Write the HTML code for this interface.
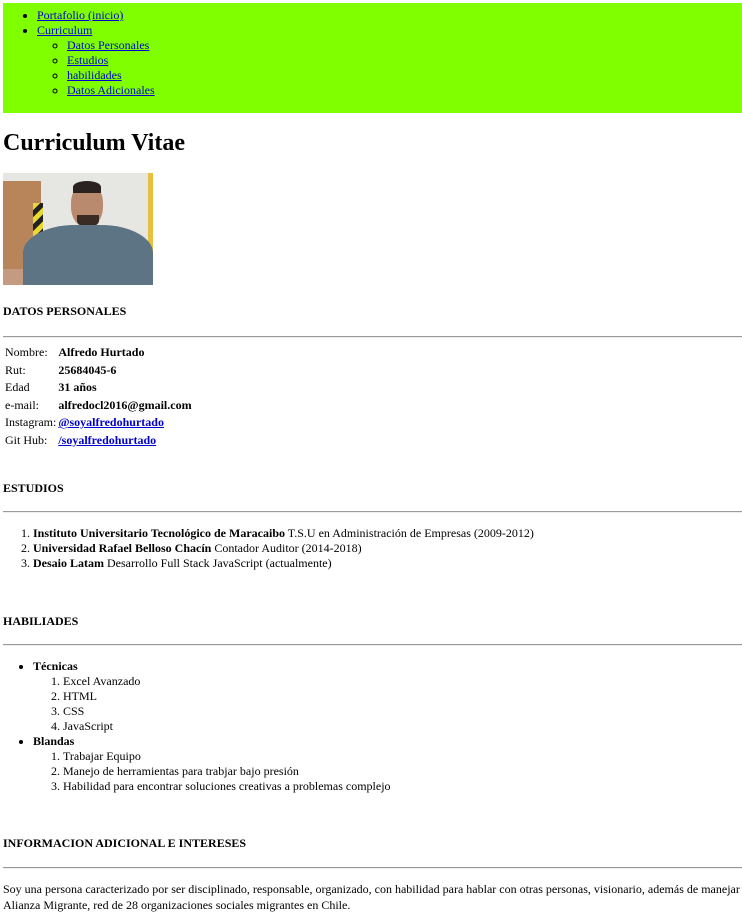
<!DOCTYPE html>
<html><head><meta charset="utf-8"><style>
body{margin:0;width:742px;height:922px;position:relative;font-family:"Liberation Serif",serif;font-size:12px;line-height:15px;color:#000;background:#fff;overflow:hidden}
a{color:#0000cc}
.abs{position:absolute;margin:0;padding:0}
ul,ol{margin:0}
nav{position:absolute;left:3px;top:3px;width:739px;height:110px;background:#7fff00}
nav>ul{padding:5px 0 0 34px}
nav ul ul{padding-left:30px;list-style:circle}
h1{position:absolute;left:3px;top:129px;margin:0;font-size:24px;line-height:28px}
h4{position:absolute;left:3px;margin:0;font-size:12px;line-height:15px}
hr{position:absolute;left:3px;width:739px;margin:0;border:0;border-top:1px solid #9a9a9a;border-bottom:1px solid #eee;height:0}
table{position:absolute;left:3px;top:344px;border-collapse:collapse}
td{padding:0 1px 0 2px;height:17.5px;line-height:17.5px}
td+td{padding-left:1px}
.photo{position:absolute;left:3px;top:173px;width:150px;height:112px;overflow:hidden;background:#e6e6e3}
</style></head><body>
<nav><ul>
<li><a href="#">Portafolio (inicio)</a></li>
<li><a href="#">Curriculum</a>
<ul><li><a href="#">Datos Personales</a></li><li><a href="#">Estudios</a></li><li><a href="#">habilidades</a></li><li><a href="#">Datos Adicionales</a></li></ul></li>
</ul></nav>
<h1>Curriculum Vitae</h1>
<div class="photo">
<div style="position:absolute;left:0;top:8px;width:38px;height:104px;background:#b8845a"></div>
<div style="position:absolute;left:30px;top:30px;width:10px;height:45px;background:repeating-linear-gradient(135deg,#e8d832 0 5px,#222 5px 10px)"></div>
<div style="position:absolute;left:145px;top:0;width:5px;height:80px;background:#e8c040"></div>
<div style="position:absolute;left:68px;top:10px;width:32px;height:44px;border-radius:45%;background:#b98a6e"></div>
<div style="position:absolute;left:70px;top:8px;width:28px;height:12px;border-radius:50% 50% 0 0;background:#2a2220"></div>
<div style="position:absolute;left:74px;top:42px;width:22px;height:12px;border-radius:0 0 50% 50%;background:#3a2c25"></div>
<div style="position:absolute;left:20px;top:52px;width:130px;height:70px;border-radius:40% 40% 0 0;background:#5c7484"></div>
<div style="position:absolute;left:0;top:96px;width:20px;height:16px;background:#c49a80"></div>
</div>
<h4 style="top:304px">DATOS PERSONALES</h4>
<hr style="top:336px">
<table>
<tr><td>Nombre:</td><td><b>Alfredo Hurtado</b></td></tr>
<tr><td>Rut:</td><td><b>25684045-6</b></td></tr>
<tr><td>Edad</td><td><b>31 años</b></td></tr>
<tr><td>e-mail:</td><td><b>alfredocl2016@gmail.com</b></td></tr>
<tr><td>Instagram:</td><td><a href="#"><b>@soyalfredohurtado</b></a></td></tr>
<tr><td>Git Hub:</td><td><a href="#"><b>/soyalfredohurtado</b></a></td></tr>
</table>
<h4 style="top:481px">ESTUDIOS</h4>
<hr style="top:511px">
<ol class="abs" style="top:526px;left:3px;padding-left:30px">
<li><b>Instituto Universitario Tecnológico de Maracaibo</b> T.S.U en Administración de Empresas (2009-2012)</li>
<li><b>Universidad Rafael Belloso Chacín</b> Contador Auditor (2014-2018)</li>
<li><b>Desaio Latam</b> Desarrollo Full Stack JavaScript (actualmente)</li>
</ol>
<h4 style="top:614px">HABILIADES</h4>
<hr style="top:644px">
<ul class="abs" style="top:659px;left:3px;padding-left:30px">
<li><b>Técnicas</b><ol style="padding-left:30px"><li>Excel Avanzado</li><li>HTML</li><li>CSS</li><li>JavaScript</li></ol></li>
<li><b>Blandas</b><ol style="padding-left:30px"><li>Trabajar Equipo</li><li>Manejo de herramientas para trabjar bajo presión</li><li>Habilidad para encontrar soluciones creativas a problemas complejo</li></ol></li>
</ul>
<h4 style="top:836px">INFORMACION ADICIONAL E INTERESES</h4>
<hr style="top:867px">
<p class="abs" style="top:881px;left:3px;width:742px;line-height:16px">Soy una persona caracterizado por ser disciplinado, responsable, organizado, con habilidad para hablar con otras personas, visionario, además de manejar Alianza Migrante, red de 28 organizaciones sociales migrantes en Chile.</p>
</body></html>
